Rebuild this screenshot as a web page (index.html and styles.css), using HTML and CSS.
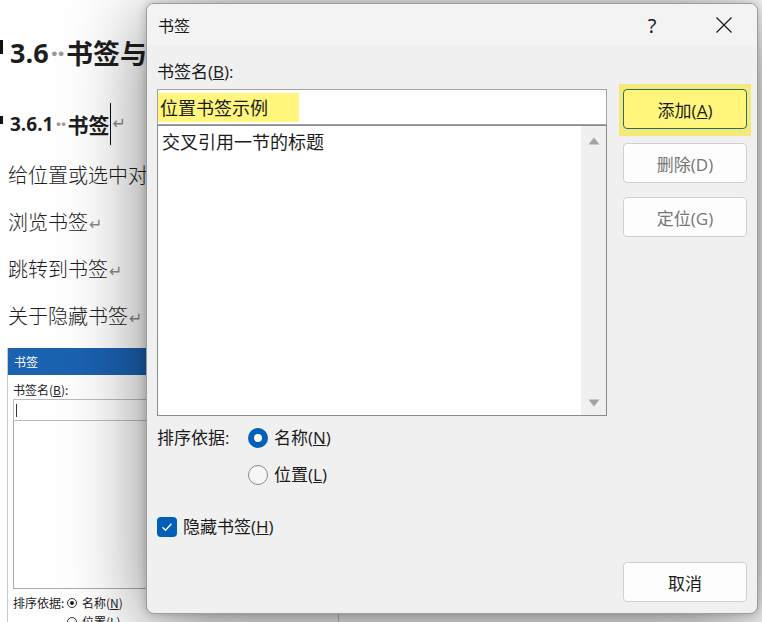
FILE: index.html
```html
<!DOCTYPE html>
<html lang="zh-CN">
<head>
<meta charset="utf-8">
<title>书签</title>
<link rel="stylesheet" href="styles.css">
</head>
<body>
<div class="doc">
  <div class="h1"><span class="mark"></span><span class="num">3.6</span><span class="sp">··</span><span class="cjk">书签与交叉引用</span></div>
  <div class="h2"><span class="mark mark2"></span><span class="num">3.6.1</span><span class="sp">··</span><span class="cjk">书签</span><span class="caret"></span><span class="ret">↵</span></div>
  <p class="para">给位置或选中对象添加书签<span class="ret">↵</span></p>
  <p class="para">浏览书签<span class="ret">↵</span></p>
  <p class="para">跳转到书签<span class="ret">↵</span></p>
  <p class="para">关于隐藏书签<span class="ret">↵</span></p>
  <div class="shot">
    <div class="shot-title">书签</div>
    <div class="shot-body">
      <div class="shot-label">书签名(<u>B</u>):</div>
      <div class="shot-input"><span class="shot-caret"></span></div>
      <div class="shot-list"></div>
      <div class="shot-row"><span class="shot-sortlbl">排序依据:</span><span class="shot-radio on"></span><span>名称(<u>N</u>)</span></div>
      <div class="shot-row shot-row2"><span class="shot-radio"></span><span>位置(<u>L</u>)</span></div>
    </div>
  </div>
</div>

<div class="dialog">
  <div class="titlebar">
    <span class="title">书签</span>
    <span class="help">?</span>
    <span class="close"><svg width="18" height="18" viewBox="0 0 18 18"><path d="M1.5 1.5 L16.5 16.5 M16.5 1.5 L1.5 16.5" stroke="#1b1b1b" stroke-width="1.2" fill="none"/></svg></span>
  </div>
  <div class="dbody">
    <div class="leftcol">
      <div class="lbl">书签名(<u>B</u>):</div>
      <div class="input"><span class="hl">位置书签示例</span></div>
      <div class="list">
        <div class="list-items"><div class="item">交叉引用一节的标题</div></div>
        <div class="scrollbar">
          <svg width="12" height="8" viewBox="0 0 12 8"><path d="M6 0.5 L11.5 7.5 L0.5 7.5 Z" fill="#a3a3a3"/></svg>
          <svg width="12" height="8" viewBox="0 0 12 8"><path d="M6 7.5 L11.5 0.5 L0.5 0.5 Z" fill="#a3a3a3"/></svg>
        </div>
      </div>
      <div class="sort">
        <span class="sort-lbl">排序依据:</span>
        <label class="opt"><span class="radio on"></span><span>名称(<u>N</u>)</span></label>
        <label class="opt opt2"><span class="radio"></span><span>位置(<u>L</u>)</span></label>
      </div>
      <label class="check-row"><span class="check"><svg width="12" height="10" viewBox="0 0 12 10"><path d="M1.5 5.2 L4.5 8.2 L10.5 1.8" stroke="#fff" stroke-width="1.3" fill="none"/></svg></span><span>隐藏书签(<u>H</u>)</span></label>
    </div>
    <div class="rightcol">
      <div class="hl-wrap"><button class="btn primary">添加(<u>A</u>)</button></div>
      <button class="btn disabled del">删除(D)</button>
      <button class="btn disabled goto">定位(G)</button>
      <button class="btn cancel">取消</button>
    </div>
  </div>
</div>
</body>
</html>
```

FILE: styles.css
```css
html, body {
  margin: 0;
  padding: 0;
}
body {
  width: 762px;
  height: 622px;
  overflow: hidden;
  position: relative;
  background: #ffffff;
  font-family: "Open Sans", "Noto Sans CJK SC", sans-serif;
}

/* ---------- document behind ---------- */
.doc {
  display: flex;
  flex-direction: column;
  white-space: nowrap;
  color: #1e1e1e;
}
.h1 {
  margin-top: 35px;
  height: 36px;
  line-height: 36px;
  display: flex;
  align-items: center;
  font-weight: 700;
  font-size: 27px;
}
.mark {
  width: 3px;
  height: 14px;
  background: #111;
  margin-right: 7px;
  align-self: center;
  position: relative;
  top: -6px;
}
.mark2 {
  height: 8px;
  top: -4px;
}
.num {
  font-family: "Open Sans", sans-serif;
  font-weight: 700;
}
.sp {
  color: #9a9a9a;
  font-weight: 700;
  letter-spacing: -1px;
  margin: 0 2px;
}
.cjk {
  font-family: "Noto Sans CJK SC", sans-serif;
  font-weight: 700;
}
.h2 {
  margin-top: 35px;
  height: 36px;
  line-height: 36px;
  display: flex;
  align-items: center;
  font-size: 21px;
  font-weight: 700;
}
.h2 .num { font-size: 19px; }
.caret {
  width: 1px;
  height: 42px;
  background: #111;
  margin-left: 1px;
}
.ret {
  font-family: "DejaVu Sans", sans-serif;
  font-weight: 400;
  font-size: 16px;
  color: #8a8a8a;
  margin-left: 1px;
}
.para {
  margin: 19px 0 0 8px;
  font-family: "Noto Sans CJK SC", sans-serif;
  font-weight: 300;
  font-size: 20px;
  line-height: 28px;
  height: 28px;
}
.para + .para { margin-top: 19px; }

/* embedded screenshot */
.shot {
  margin: 18px 0 0 7px;
  width: 330px;
  border: 1px solid #c9c9c9;
  border-top: none;
  background: #fff;
  font-family: "Noto Sans CJK SC", sans-serif;
  font-size: 12px;
  color: #222;
}
.shot-title {
  height: 27px;
  line-height: 27px;
  background: #1b62b1;
  color: #fff;
  padding-left: 6px;
}
.shot-body {
  padding-left: 5px;
  display: flex;
  flex-direction: column;
}
.shot-label {
  margin-top: 7px;
  line-height: 16px;
}
.shot-input {
  margin-top: 1px;
  height: 22px;
  width: 320px;
  box-sizing: border-box;
  border: 1px solid #bdbdbd;
  display: flex;
  align-items: center;
  padding-left: 2px;
}
.shot-caret {
  width: 1px;
  height: 13px;
  background: #333;
}
.shot-list {
  height: 168px;
  width: 320px;
  box-sizing: border-box;
  border: 1px solid #a9a9a9;
  border-top: none;
}
.shot-row {
  margin-top: 6px;
  line-height: 16px;
  display: flex;
  align-items: center;
}
.shot-sortlbl { width: 54px; }
.shot-row2 { padding-left: 54px; margin-top: 3px; }
.shot-radio {
  width: 10px;
  height: 10px;
  box-sizing: border-box;
  border: 1px solid #333;
  border-radius: 50%;
  margin-right: 5px;
  position: relative;
}
.shot-radio.on::after {
  content: "";
  position: absolute;
  left: 2px;
  top: 2px;
  width: 4px;
  height: 4px;
  border-radius: 50%;
  background: #222;
}

/* ---------- dialog ---------- */
.dialog {
  position: absolute;
  left: 146px;
  top: 3px;
  width: 612px;
  height: 611px;
  box-sizing: border-box;
  border: 1px solid #9d9d9d;
  border-radius: 8px;
  background: #f0f0f0;
  box-shadow: 0 14px 80px rgba(0, 0, 0, 0.5), 0 0 10px rgba(0, 0, 0, 0.22);
  display: flex;
  flex-direction: column;
  overflow: hidden;
  color: #1b1b1b;
}
.titlebar {
  height: 42px;
  flex: none;
  display: flex;
  align-items: center;
  background: #f3f3f3;
  padding-left: 11px;
}
.title {
  flex: 1;
  font-family: "Noto Sans CJK SC", sans-serif;
  font-size: 16px;
}
.help {
  width: 40px;
  text-align: center;
  font-family: "Noto Sans", sans-serif;
  font-size: 20px;
  margin-right: 19px;
  color: #1b1b1b;
}
.close {
  width: 66px;
  display: flex;
  justify-content: center;
  align-items: center;
}
.dbody {
  flex: 1;
  display: flex;
  gap: 16px;
  padding: 14px 10px 11px;
  min-height: 0;
}
.leftcol {
  width: 450px;
  display: flex;
  flex-direction: column;
}
.lbl {
  font-size: 17px;
  line-height: 24px;
  height: 24px;
}
.input {
  margin-top: 5px;
  height: 36px;
  box-sizing: border-box;
  border: 1px solid #a3a3a3;
  background: #fff;
  display: flex;
  align-items: center;
}
.hl {
  background: #fff67b;
  width: 139px;
  height: 29px;
  line-height: 29px;
  padding-left: 2px;
  margin-top: 1px;
  font-family: "Noto Sans CJK SC", sans-serif;
  font-size: 18px;
}
.list {
  height: 291px;
  box-sizing: border-box;
  border: 1px solid #878a91;
  background: #fff;
  display: flex;
}
.list-items {
  flex: 1;
  padding: 3px 0 0 4px;
}
.item {
  font-family: "Noto Sans CJK SC", sans-serif;
  font-size: 18px;
  line-height: 24px;
}
.scrollbar {
  width: 25px;
  background: #f0f0f0;
  display: flex;
  flex-direction: column;
  align-items: center;
  justify-content: space-between;
  padding: 11px 0 8px;
}
.sort {
  margin-top: 10px;
  display: grid;
  grid-template-columns: 91px auto;
  row-gap: 13px;
  font-size: 17px;
  line-height: 24px;
}
.sort-lbl { grid-column: 1; grid-row: 1; }
.opt {
  grid-column: 2;
  display: flex;
  align-items: center;
  gap: 6px;
}
.opt2 { grid-row: 2; }
.radio {
  width: 20px;
  height: 20px;
  box-sizing: border-box;
  border-radius: 50%;
  border: 1px solid #8a8a8a;
  background: #f6f6f6;
  position: relative;
}
.radio.on {
  border: none;
  background: #005fb8;
}
.radio.on::after {
  content: "";
  position: absolute;
  left: 6px;
  top: 6px;
  width: 8px;
  height: 8px;
  border-radius: 50%;
  background: #fff;
}
.check-row {
  margin-top: 28px;
  display: flex;
  align-items: center;
  gap: 6px;
  font-size: 17px;
  line-height: 24px;
}
.check {
  width: 20px;
  height: 20px;
  border-radius: 4px;
  background: #005fb8;
  display: flex;
  align-items: center;
  justify-content: center;
}
.rightcol {
  width: 124px;
  display: flex;
  flex-direction: column;
}
.hl-wrap {
  margin: 24px -4px 0;
  padding: 5px 4px 7px;
  background: #f3ea7a;
  display: flex;
}
.btn {
  width: 124px;
  height: 40px;
  box-sizing: border-box;
  border: 1px solid #d0d0d0;
  border-radius: 4px;
  background: #fdfdfd;
  font-family: "Open Sans", "Noto Sans CJK SC", sans-serif;
  font-size: 17px;
  color: #1b1b1b;
  padding: 0;
}
.btn.primary {
  background: #fff67b;
  border-color: #246f6b;
}
.btn.disabled { color: #767676; }
.del { margin-top: 7px; }
.goto { margin-top: 14px; }
.cancel { margin-top: auto; }
```
